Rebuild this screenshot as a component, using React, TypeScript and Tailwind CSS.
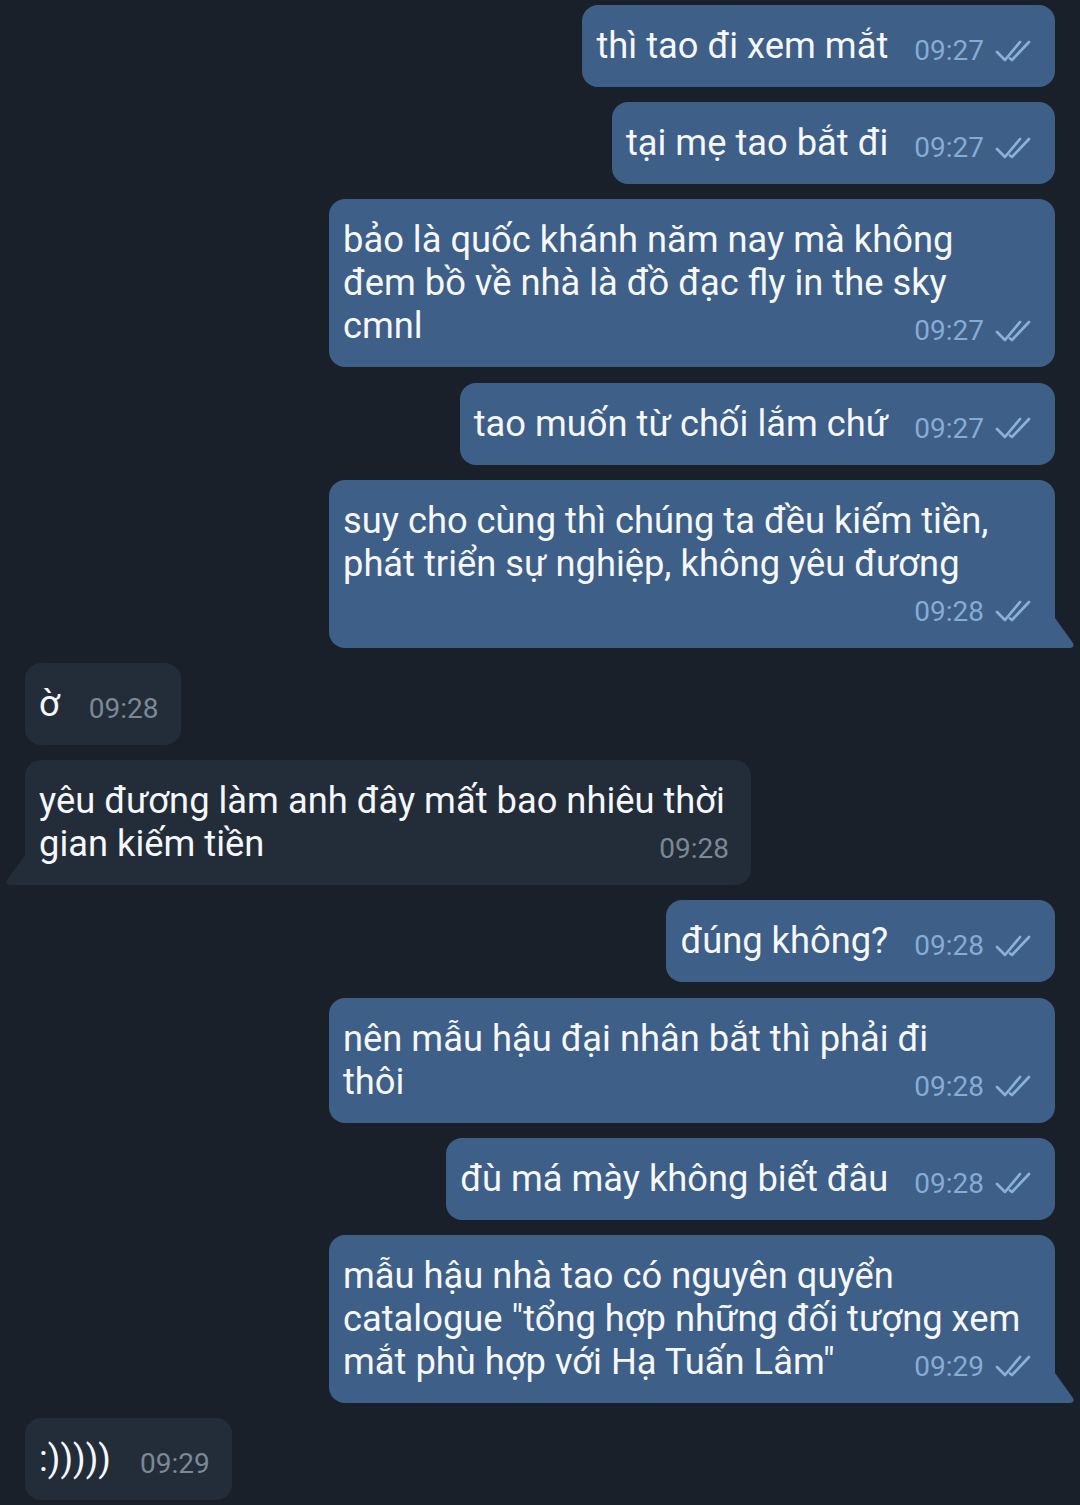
import { FC } from 'react';

type Msg = {
  out: boolean;
  lines: string[];
  time: string;
  tail?: boolean;
};

const messages: Msg[] = [
  { out: true, lines: ['thì tao đi xem mắt'], time: '09:27' },
  { out: true, lines: ['tại mẹ tao bắt đi'], time: '09:27' },
  {
    out: true,
    lines: ['bảo là quốc khánh năm nay mà không', 'đem bồ về nhà là đồ đạc fly in the sky', 'cmnl'],
    time: '09:27',
  },
  { out: true, lines: ['tao muốn từ chối lắm chứ'], time: '09:27' },
  {
    out: true,
    lines: ['suy cho cùng thì chúng ta đều kiếm tiền,', 'phát triển sự nghiệp, không yêu đương'],
    time: '09:28',
    tail: true,
  },
  { out: false, lines: ['ờ'], time: '09:28' },
  {
    out: false,
    lines: ['yêu đương làm anh đây mất bao nhiêu thời', 'gian kiếm tiền'],
    time: '09:28',
    tail: true,
  },
  { out: true, lines: ['đúng không?'], time: '09:28' },
  { out: true, lines: ['nên mẫu hậu đại nhân bắt thì phải đi', 'thôi'], time: '09:28' },
  { out: true, lines: ['đù má mày không biết đâu'], time: '09:28' },
  {
    out: true,
    lines: [
      'mẫu hậu nhà tao có nguyên quyển',
      'catalogue "tổng hợp những đối tượng xem',
      'mắt phù hợp với Hạ Tuấn Lâm"',
    ],
    time: '09:29',
    tail: true,
  },
  { out: false, lines: [':)))))'], time: '09:29' },
];

const DoubleCheck: FC = () => (
  <svg width="38" height="24" viewBox="0 0 38 24" fill="none" className="shrink-0">
    <path d="M2 13 L10 21 L25 3" stroke="#8ab1db" strokeWidth="2.7" strokeLinecap="round" strokeLinejoin="round" />
    <path d="M15 19.5 L17 21 L34 3" stroke="#8ab1db" strokeWidth="2.7" strokeLinecap="round" strokeLinejoin="round" />
  </svg>
);

const Meta: FC<{ out: boolean; time: string; float?: boolean }> = ({ out, time, float }) => (
  <span
    className={`${float ? 'float-right' : ''} flex items-center mt-[10px] leading-[33px] text-[28px] ${
      out ? 'ml-[26px] text-[#86acd6]' : 'ml-[29px] text-[#7b8896]'
    }`}
  >
    <span>{time}</span>
    {out && (
      <span className="ml-[11px] flex items-center">
        <DoubleCheck />
      </span>
    )}
  </span>
);

const Bubble: FC<{ msg: Msg }> = ({ msg }) => {
  const multi = msg.lines.length > 1;
  const base = msg.out ? 'bg-[#3e5f87] self-end' : 'bg-[#232d39] self-start';
  const corners = msg.tail ? (msg.out ? 'rounded-[16px] rounded-br-none' : 'rounded-[16px] rounded-bl-none') : 'rounded-[16px]';

  return (
    <div
      className={`relative ${base} ${corners} pl-[14px] pr-[22px] pt-[19px] pb-[20px] text-[36.3px] leading-[43px] text-[#f5f7fa] ${
        multi ? 'w-[726px] flow-root' : 'w-fit flex items-start'
      }`}
    >
      {multi ? (
        <div className="flow-root">
          {msg.lines.map((l, i) => (
            <span key={i}>
              {l}
              {i < msg.lines.length - 1 && <br />}
            </span>
          ))}
          <Meta out={msg.out} time={msg.time} float />
        </div>
      ) : (
        <>
          <span className="whitespace-nowrap">{msg.lines[0]}</span>
          <Meta out={msg.out} time={msg.time} />
        </>
      )}

      {/* bubble tail */}
      {msg.tail && msg.out && (
        <svg width="20" height="30" viewBox="0 0 20 30" className="absolute bottom-0 right-[-20px]">
          <path d="M0 0 L18 25 Q20 29.5 15 30 L0 30 Z" fill="#3e5f87" />
        </svg>
      )}
      {msg.tail && !msg.out && (
        <svg width="20" height="30" viewBox="0 0 20 30" className="absolute bottom-0 left-[-20px]">
          <path d="M20 0 L2 25 Q0 29.5 5 30 L20 30 Z" fill="#232d39" />
        </svg>
      )}
    </div>
  );
};

const App: FC = () => {
  return (
    <div
      className="w-[1080px] h-[1505px] overflow-hidden bg-[#19202a] px-[25px] pt-[5px] flex flex-col gap-[15.2px]"
      style={{ fontFamily: 'Roboto, "Noto Sans", sans-serif' }}
    >
      {messages.map((m, i) => (
        <Bubble key={i} msg={m} />
      ))}
    </div>
  );
};

export default App;
